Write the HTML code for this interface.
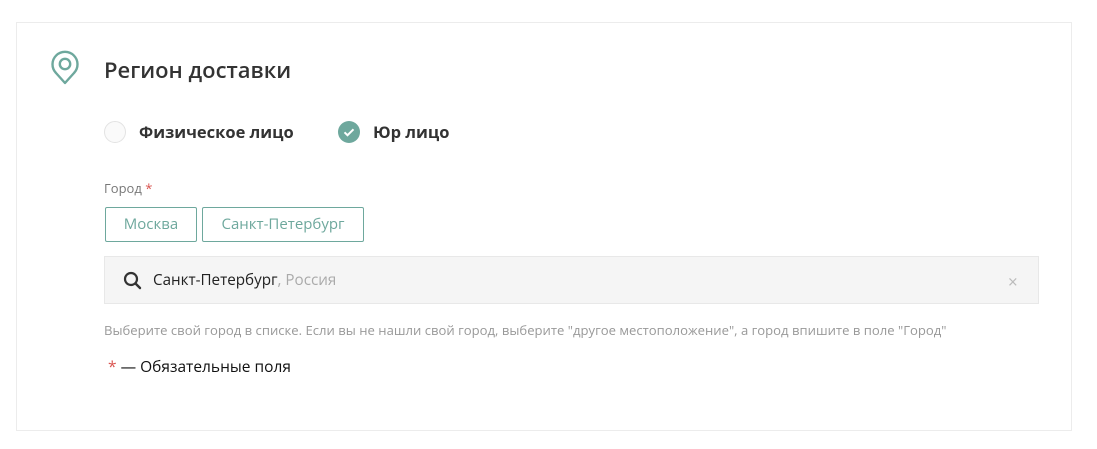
<!DOCTYPE html><html><head><meta charset="utf-8"><style>
body{margin:0;background:#fff;font-family:"Open Sans","Liberation Sans","DejaVu Sans",sans-serif;width:1097px;height:449px;position:relative;overflow:hidden}
.a{position:absolute;white-space:nowrap}
.card{position:absolute;left:16px;top:22px;width:1054px;height:407px;border:1px solid #ececec}
.btn{position:absolute;top:207px;height:33px;border:1px solid #6ea89d;border-radius:2px;color:#6ea89d;font-size:15px;line-height:33px;text-align:center;box-sizing:content-box}
</style></head><body>
<div class="card"></div>
<svg class="a" style="left:50px;top:50px" width="32" height="36" viewBox="0 0 32 36"><path d="M15 33 L6 23 A12.5 12.5 0 1 1 24 23 Z" fill="none" stroke="#6ea89d" stroke-width="2.4" stroke-linejoin="round"/><circle cx="15" cy="14" r="5.2" fill="none" stroke="#6ea89d" stroke-width="2.4"/></svg>
<div class="a" style="left:104px;top:55px;font-size:22px;font-weight:600;color:#333">Регион доставки</div>
<div class="a" style="left:104px;top:121px;width:20px;height:20px;border:1px solid #e3e3e3;border-radius:50%;background:#fafafa"></div>
<div class="a" style="left:139px;top:120px;font-size:16.5px;font-weight:bold;color:#333">Физическое лицо</div>
<svg class="a" style="left:338px;top:121px" width="22" height="22"><circle cx="11" cy="11" r="11" fill="#6ea89d"/><path d="M6.5 11.3 L9.5 14.2 L15.5 8.3" fill="none" stroke="#fff" stroke-width="2"/></svg>
<div class="a" style="left:373px;top:120px;font-size:16.5px;font-weight:bold;color:#333">Юр лицо</div>
<div class="a" style="left:104px;top:179px;font-size:13px;color:#777">Город <span style="color:#d9534f">*</span></div>
<div class="btn" style="left:105px;width:90px">Москва</div>
<div class="btn" style="left:202px;width:160px">Санкт-Петербург</div>
<div class="a" style="left:104px;top:256px;width:933px;height:46px;background:#f5f5f5;border:1px solid #e8e8e8"></div>
<svg class="a" style="left:123px;top:271px" width="20" height="20"><circle cx="8" cy="8" r="6" fill="none" stroke="#333" stroke-width="2.2"/><path d="M12.5 12.5 L17 17" stroke="#333" stroke-width="2.4" stroke-linecap="round"/></svg>
<div class="a" style="left:153px;top:270px;font-size:15.2px;color:#222">Санкт-Петербург<span style="color:#aaa">, Россия</span></div>
<div class="a" style="left:1008px;top:270px;font-size:17px;color:#bbb">×</div>
<div class="a" style="left:104px;top:321px;font-size:13.1px;color:#999">Выберите свой город в списке. Если вы не нашли свой город, выберите "другое местоположение", а город впишите в поле "Город"</div>
<div class="a" style="left:108px;top:355px;font-size:15.5px;color:#111"><span style="color:#d9534f">*</span> — Обязательные поля</div>
</body></html>
